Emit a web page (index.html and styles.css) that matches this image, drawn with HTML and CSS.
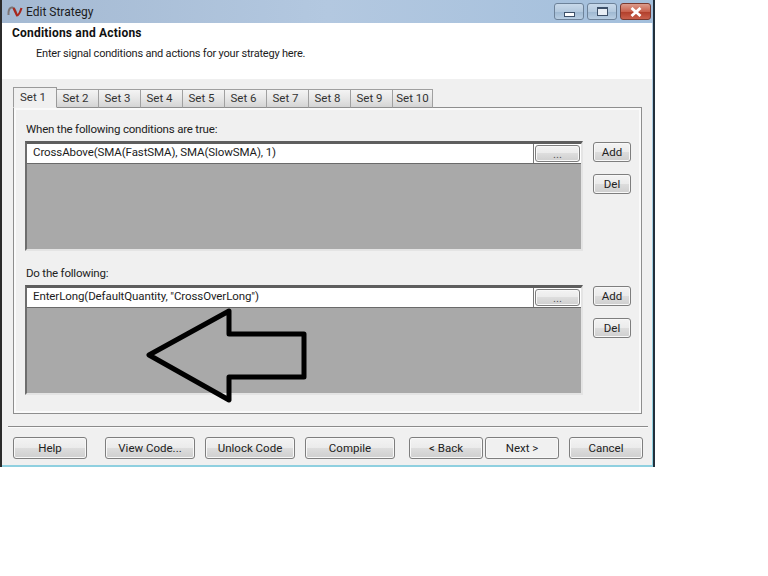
FILE: index.html
```html
<!DOCTYPE html>
<html lang="en">
<head>
<meta charset="utf-8">
<title>Edit Strategy</title>
<link rel="stylesheet" href="styles.css">
</head>
<body>
<div class="window">
  <div class="titlebar">
    <svg class="app-icon" width="16" height="14" viewBox="0 0 16 14">
      <path d="M1.500 11C1 4 5 1.500 7.500 5C8.500 6.500 9 8.500 9.500 10" fill="none" stroke="#7c7474" stroke-width="2"/>
      <path d="M6.500 4L10 11.500C11.500 11.500 13.500 7 14.500 4" fill="none" stroke="#a8281e" stroke-width="2.200"/>
    </svg>
    <span class="title">Edit Strategy</span>
    <div class="caption-buttons">
      <div class="cap cap-min"><span class="glyph-min"></span></div>
      <div class="cap cap-max"><span class="glyph-max"></span></div>
      <div class="cap cap-close">
        <svg width="16" height="10" viewBox="0 0 16 10"><path d="M3.500 1L12.500 9M12.500 1L3.500 9" stroke="#fff" stroke-width="2.800" fill="none"/></svg>
      </div>
    </div>
  </div>
  <div class="client">
    <div class="header">
      <div class="header-title">Conditions and Actions</div>
      <div class="header-sub">Enter signal conditions and actions for your strategy here.</div>
    </div>
    <div class="body">
      <div class="tabs">
        <div class="tab active">Set 1</div>
        <div class="tab">Set 2</div>
        <div class="tab">Set 3</div>
        <div class="tab">Set 4</div>
        <div class="tab">Set 5</div>
        <div class="tab">Set 6</div>
        <div class="tab">Set 7</div>
        <div class="tab">Set 8</div>
        <div class="tab">Set 9</div>
        <div class="tab">Set 10</div>
      </div>
      <div class="panel">
        <div class="section">
          <div class="section-label">When the following conditions are true:</div>
          <div class="section-row">
            <div class="grid">
              <div class="grid-row">
                <span class="grid-text">CrossAbove(SMA(FastSMA), SMA(SlowSMA), 1)</span>
                <button class="btn btn-dots">...</button>
              </div>
            </div>
            <div class="side">
              <button class="btn btn-side">Add</button>
              <button class="btn btn-side">Del</button>
            </div>
          </div>
        </div>
        <div class="section section-second">
          <div class="section-label">Do the following:</div>
          <div class="section-row">
            <div class="grid">
              <div class="grid-row">
                <span class="grid-text">EnterLong(DefaultQuantity, "CrossOverLong")</span>
                <button class="btn btn-dots">...</button>
              </div>
            </div>
            <div class="side">
              <button class="btn btn-side">Add</button>
              <button class="btn btn-side">Del</button>
            </div>
          </div>
        </div>
      </div>
      <div class="separator"></div>
      <div class="footer">
        <button class="btn btn-nav">Help</button>
        <button class="btn btn-wide btn-gap-l">View Code...</button>
        <button class="btn btn-wide btn-gap-m">Unlock Code</button>
        <button class="btn btn-wide btn-gap-m">Compile</button>
        <button class="btn btn-nav btn-gap-n">&lt; Back</button>
        <button class="btn btn-nav btn-next">Next &gt;</button>
        <button class="btn btn-nav btn-gap-m">Cancel</button>
      </div>
    </div>
  </div>
  <svg class="arrow" width="170" height="100" viewBox="0 0 170 100">
    <path d="M85 4L5 48L85 93V70H160V27H85Z" fill="none" stroke="#000" stroke-width="5" stroke-linejoin="round"/>
  </svg>
</div>
</body>
</html>
```
FILE: styles.css
```css
html, body {
  margin: 0;
  padding: 0;
  background: #fff;
}
body {
  width: 768px;
  height: 576px;
  overflow: hidden;
  font-family: Roboto, "Liberation Sans", sans-serif;
  font-size: 11.500px;
  color: #1c1c1c;
}
.window {
  position: relative;
  box-sizing: border-box;
  width: 655px;
  height: 467px;
  background: linear-gradient(#b5cbe2, #8fd0e0);
  border-left: 2px solid #2b2b2b;
  border-right: 2px solid #22303c;
  display: flex;
  flex-direction: column;
}
.titlebar {
  height: 23px;
  flex: none;
  display: flex;
  align-items: flex-start;
  padding-left: 5px;
  background: linear-gradient(90deg, #a4b9d2, #b3c8e0 50%, #a3bfdc);
}
.app-icon {
  margin-top: 4px;
}
.title {
  margin-left: 3px;
  margin-top: 3px;
  line-height: 18px;
  font-size: 12px;
}
.caption-buttons {
  margin-left: auto;
  margin-right: 2px;
  margin-top: 3px;
  display: flex;
  gap: 3px;
}
.cap {
  box-sizing: border-box;
  height: 17px;
  border: 1px solid #6d8299;
  border-radius: 3px;
  display: flex;
  align-items: center;
  justify-content: center;
  background: linear-gradient(#c8d9ea, #b4c9de 50%, #9fb9d2 55%, #b9cee3);
}
.cap-min, .cap-max {
  width: 30px;
}
.cap-close {
  width: 31px;
  border-color: #7a3a30;
  background: linear-gradient(#dc9c8c, #c9624e 50%, #b2402c 55%, #c9604c);
}
.glyph-min {
  display: block;
  width: 9px;
  height: 3px;
  margin-top: 5px;
  background: #fff;
  border: 1px solid #3d5068;
}
.glyph-max {
  display: block;
  box-sizing: border-box;
  width: 11px;
  height: 9px;
  background: #e8eef5;
  border: 1px solid #3d5068;
  border-top-width: 2px;
}
.client {
  flex: 1;
  display: flex;
  flex-direction: column;
  margin-right: 1px;
  margin-bottom: 2px;
  background: #f0f0f0;
}
.header {
  box-sizing: border-box;
  height: 56px;
  flex: none;
  background: #fff;
  padding: 2px 0 0 10px;
}
.header-title {
  font-weight: 700;
  font-size: 12px;
  line-height: 17px;
  letter-spacing: 0.2px;
  color: #111;
}
.header-sub {
  margin: 3px 0 0 24px;
  line-height: 18px;
  font-size: 11px;
  letter-spacing: -0.2px;
}
.body {
  flex: 1;
  display: flex;
  flex-direction: column;
  padding: 8px 0 0 11px;
}
.tabs {
  display: flex;
  align-items: flex-end;
  height: 21px;
  position: relative;
  z-index: 1;
  margin-bottom: -1px;
}
.tab {
  box-sizing: border-box;
  width: 42px;
  height: 19px;
  text-align: center;
  line-height: 17px;
  padding-right: 4px;
  border: 1px solid #a0a0a0;
  border-left-width: 0;
  border-bottom: 1px solid #8f8f8f;
  background: linear-gradient(#f4f4f4, #e6e6e6 50%, #d4d4d4);
  color: #333;
}
.tab:last-child {
  width: 40px;
  padding-right: 0;
}
.tab.active {
  width: 44px;
  height: 21px;
  line-height: 18px;
  background: #f0f0f0;
  border-left-width: 1px;
  border-color: #9a9a9a #9a9a9a #f0f0f0;
}
.panel {
  box-sizing: border-box;
  width: 629px;
  height: 307px;
  border: 1px solid #8e8e8e;
  box-shadow: inset 0 0 0 2px #fafafa;
  padding: 13px 10px 0 11px;
}
.section-label {
  padding-left: 1px;
  line-height: 17px;
  height: 20px;
  color: #222;
  letter-spacing: -0.2px;
}
.section-second {
  margin-top: 14px;
}
.section-row {
  display: flex;
  align-items: flex-start;
  gap: 10px;
}
.grid {
  box-sizing: border-box;
  width: 558px;
  height: 110px;
  background: #a9a9a9;
  border-top: 3px solid #5e5e5e;
  border-left: 2px solid #6e6e6e;
  border-right: 2px solid #e4e4e4;
  border-bottom: 2px solid #e4e4e4;
}
.grid-row {
  height: 19px;
  background: #fff;
  border-bottom: 1px solid #6a6a6a;
  display: flex;
}
.grid-text {
  padding-left: 6px;
  line-height: 17px;
  border-right: 1px solid #777;
  flex: 1;
  letter-spacing: -0.1px;
}
.btn {
  font: inherit;
  color: #222;
  padding: 0;
  border: 1px solid #7e7e7e;
  border-radius: 3px;
  background: linear-gradient(#f3f3f3, #ebebeb 50%, #dddddd 50%, #cfcfcf);
  box-shadow: inset 0 0 0 1px #f8f8f8;
}
.btn-dots {
  flex: none;
  width: 45px;
  height: 17px;
  margin: 1px 1px 0 1px;
  line-height: 14px;
  color: #555;
}
.side {
  display: flex;
  flex-direction: column;
  gap: 12px;
  padding-top: 1px;
}
.btn-side {
  width: 38px;
  height: 20px;
}
.separator {
  width: 640px;
  margin: 12px 0 0 -5px;
  border-top: 1px solid #8b8b8b;
  height: 1px;
  background: #fbfbfb;
}
.footer {
  display: flex;
  margin-top: 9px;
}
.footer .btn {
  height: 22px;
  flex: none;
}
.btn-nav {
  width: 74px;
}
.btn-wide {
  width: 90px;
}
.btn-gap-l {
  margin-left: 18px;
}
.btn-gap-m {
  margin-left: 10px;
}
.btn-gap-n {
  margin-left: 14px;
}
.btn-next {
  margin-left: 2px;
  background: #f0f0f0;
}
.arrow {
  position: absolute;
  left: 142px;
  top: 307px;
}
```
